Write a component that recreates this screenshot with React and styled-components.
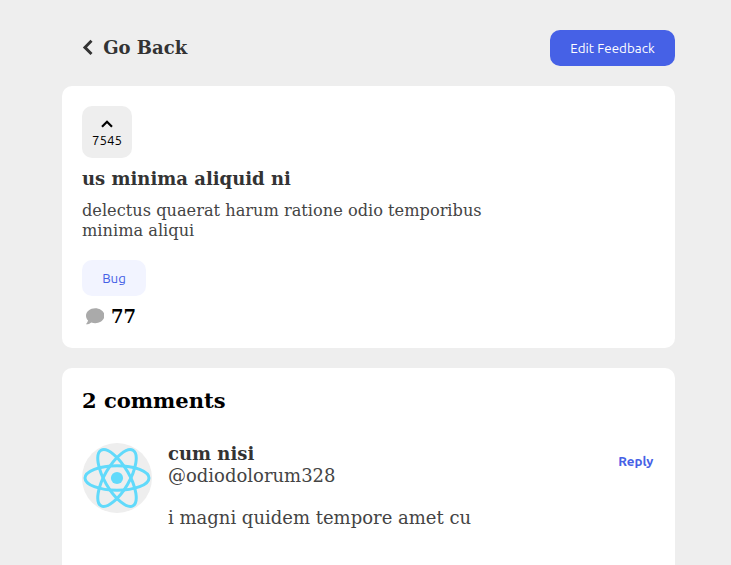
import React from "react";
import styled, { createGlobalStyle } from "styled-components";
import { FaComment } from "react-icons/fa";

const serif = `"DejaVu Serif", serif`;
const ui = `Ubuntu, "Noto Sans", sans-serif`;

const GlobalStyle = createGlobalStyle`
  * { box-sizing: border-box; margin: 0; padding: 0; }
  html, body { background: #eeeeee; overflow: hidden; height: 100%; }
  body { font-family: ${serif}; color: #000; }
`;

const Page = styled.main`
  width: 613px;
  height: 100vh;
  overflow: hidden;
  margin-left: 62px;
  padding-top: 30px;
  display: flex;
  flex-direction: column;
  gap: 20px;
`;

const TopBar = styled.header`
  display: flex;
  flex: none;
  justify-content: space-between;
  align-items: center;
  height: 36px;
  padding-left: 20px;
`;

const BackLink = styled.a`
  display: flex;
  align-items: center;
  gap: 10.2px;
  margin-bottom: 2px;
  font-size: 18px;
  font-weight: 700;
  line-height: 21px;
  color: #333;
`;

const EditButton = styled.button`
  width: 125px;
  height: 36px;
  border: 0;
  border-radius: 10px;
  background: #4661e6;
  color: #fff;
  font: 400 13.3333px ${ui};
  letter-spacing: 0.06px;
`;

const Card = styled.section`
  flex: none;
  background: #fff;
  border-radius: 10px;
  padding: 20px;
  height: 262px;
`;

const CommentsCard = styled(Card)`
  flex: 1;
  height: auto;
  min-height: 0;
  border-radius: 10px 10px 0 0;
`;

const VoteBox = styled.button`
  display: flex;
  flex-direction: column;
  align-items: center;
  width: 50px;
  height: 52px;
  padding-top: 14px;
  border: 0;
  border-radius: 10px;
  background: #eee;
  color: #000;
  font: 400 13.3333px/18px ${ui};
  gap: 4px;
`;

const Title = styled.h1`
  margin-top: 10px;
  font-size: 18px;
  line-height: 21px;
  color: #333;
`;

const Description = styled.p`
  width: 420px;
  margin-top: 12px;
  font-size: 16.2px;
  line-height: 20px;
  color: #444;
`;

const Tag = styled.span`
  display: flex;
  align-items: center;
  justify-content: center;
  width: 64px;
  height: 36px;
  margin-top: 19px;
  border-radius: 10px;
  background: #f2f4ff;
  color: #4661e6;
  font: 400 13.3333px ${ui};
`;

const CommentCount = styled.div`
  display: flex;
  align-items: center;
  gap: 7px;
  height: 21px;
  margin: 10px 0 0 3.5px;
  font-size: 18px;
  font-weight: 700;
  svg { color: #aaa; }
`;

const CommentsHeading = styled.h2`
  font-size: 21.06px;
  line-height: 25px;
`;

const Comment = styled.article`
  display: flex;
  margin-top: 30px;
`;

const Avatar = styled.svg`
  flex: none;
  width: 70px;
  height: 70px;
  border-radius: 50%;
  background: #eee;
`;

const CommentBody = styled.div`
  flex: 1;
  margin-left: 16px;
  font-size: 18px;
  line-height: 22px;
  color: #444;
`;

const Author = styled.h3`
  font-size: 18px;
  line-height: 22px;
  color: #333;
`;

const CommentText = styled.p`
  margin-top: 20px;
`;

const ReplyButton = styled.button`
  align-self: flex-start;
  margin: 10px 1.6px 0 0;
  border: 0;
  background: none;
  color: #4661e6;
  font: 700 13.3333px/18px ${ui};
`;

export default function App() {
  return (
    <>
      <GlobalStyle />
      <Page>
        <TopBar>
          <BackLink>
            <svg width="11" height="16" viewBox="0 0 11 16" fill="none" stroke="currentColor" strokeWidth="2.9">
              <path d="M9.5 1.8 2.9 8.4l6.6 6.6" />
            </svg>
            Go Back
          </BackLink>
          <EditButton>Edit Feedback</EditButton>
        </TopBar>
        <Card>
          <VoteBox>
            <svg width="12" height="8" viewBox="0 0 12 8" fill="none" stroke="currentColor" strokeWidth="2.2">
              <path d="m1 6.8 5-5 5 5" />
            </svg>
            7545
          </VoteBox>
          <Title>us minima aliquid ni</Title>
          <Description>delectus quaerat harum ratione odio temporibus minima aliqui</Description>
          <Tag>Bug</Tag>
          <CommentCount>
            <FaComment size={18.5} />
            77
          </CommentCount>
        </Card>
        <CommentsCard>
          <CommentsHeading>2 comments</CommentsHeading>
          <Comment>
            <Avatar viewBox="0 0 70 70" fill="none" stroke="#61dafb" strokeWidth="3">
              <ellipse cx="35" cy="35" rx="32" ry="12.3" />
              <ellipse cx="35" cy="35" rx="32" ry="12.3" transform="rotate(60 35 35)" />
              <ellipse cx="35" cy="35" rx="32" ry="12.3" transform="rotate(120 35 35)" />
              <circle cx="35" cy="35" r="6.1" fill="#61dafb" stroke="none" />
            </Avatar>
            <CommentBody>
              <Author>cum nisi</Author>
              <p>@odiodolorum328</p>
              <CommentText>i magni quidem tempore amet cu</CommentText>
            </CommentBody>
            <ReplyButton>Reply</ReplyButton>
          </Comment>
        </CommentsCard>
      </Page>
    </>
  );
}
